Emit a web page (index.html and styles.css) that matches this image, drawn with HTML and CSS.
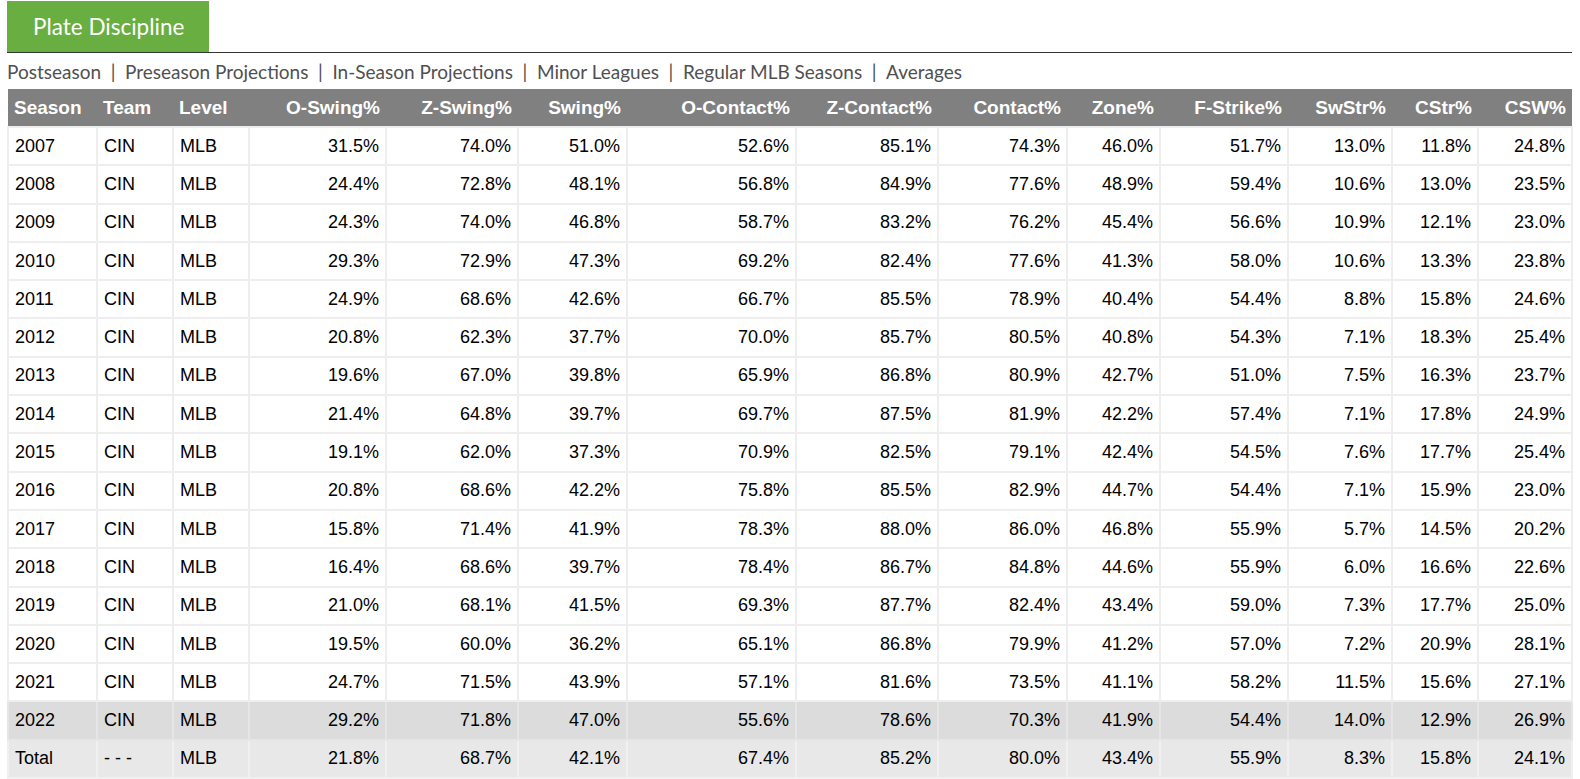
FILE: index.html
```html
<!DOCTYPE html>
<html>
<head>
<meta charset="utf-8">
<link rel="stylesheet" href="styles.css">
</head>
<body>
<div class="page">
  <div class="tabbar">
    <div class="tab">Plate Discipline</div>
  </div>
  <div class="links">
    <span class="link">Postseason</span><span class="sep">|</span><span class="link">Preseason Projections</span><span class="sep">|</span><span class="link">In-Season Projections</span><span class="sep">|</span><span class="link">Minor Leagues</span><span class="sep">|</span><span class="link">Regular MLB Seasons</span><span class="sep">|</span><span class="link">Averages</span>
  </div>
  <table class="stats">
    <colgroup>
      <col class="w-season"><col class="w-team"><col class="w-level"><col class="w-oswing"><col class="w-zswing"><col class="w-swing"><col class="w-ocontact"><col class="w-zcontact"><col class="w-contact"><col class="w-zone"><col class="w-fstrike"><col class="w-swstr"><col class="w-cstr"><col class="w-csw">
    </colgroup>
    <thead>
      <tr>
        <th class="l">Season</th><th class="l">Team</th><th class="l">Level</th><th>O-Swing%</th><th>Z-Swing%</th><th>Swing%</th><th>O-Contact%</th><th>Z-Contact%</th><th>Contact%</th><th>Zone%</th><th>F-Strike%</th><th>SwStr%</th><th>CStr%</th><th>CSW%</th>
      </tr>
    </thead>
    <tbody>
      <tr><td class="l">2007</td><td class="l">CIN</td><td class="l">MLB</td><td>31.5%</td><td>74.0%</td><td>51.0%</td><td>52.6%</td><td>85.1%</td><td>74.3%</td><td>46.0%</td><td>51.7%</td><td>13.0%</td><td>11.8%</td><td>24.8%</td></tr>
      <tr><td class="l">2008</td><td class="l">CIN</td><td class="l">MLB</td><td>24.4%</td><td>72.8%</td><td>48.1%</td><td>56.8%</td><td>84.9%</td><td>77.6%</td><td>48.9%</td><td>59.4%</td><td>10.6%</td><td>13.0%</td><td>23.5%</td></tr>
      <tr><td class="l">2009</td><td class="l">CIN</td><td class="l">MLB</td><td>24.3%</td><td>74.0%</td><td>46.8%</td><td>58.7%</td><td>83.2%</td><td>76.2%</td><td>45.4%</td><td>56.6%</td><td>10.9%</td><td>12.1%</td><td>23.0%</td></tr>
      <tr><td class="l">2010</td><td class="l">CIN</td><td class="l">MLB</td><td>29.3%</td><td>72.9%</td><td>47.3%</td><td>69.2%</td><td>82.4%</td><td>77.6%</td><td>41.3%</td><td>58.0%</td><td>10.6%</td><td>13.3%</td><td>23.8%</td></tr>
      <tr><td class="l">2011</td><td class="l">CIN</td><td class="l">MLB</td><td>24.9%</td><td>68.6%</td><td>42.6%</td><td>66.7%</td><td>85.5%</td><td>78.9%</td><td>40.4%</td><td>54.4%</td><td>8.8%</td><td>15.8%</td><td>24.6%</td></tr>
      <tr><td class="l">2012</td><td class="l">CIN</td><td class="l">MLB</td><td>20.8%</td><td>62.3%</td><td>37.7%</td><td>70.0%</td><td>85.7%</td><td>80.5%</td><td>40.8%</td><td>54.3%</td><td>7.1%</td><td>18.3%</td><td>25.4%</td></tr>
      <tr><td class="l">2013</td><td class="l">CIN</td><td class="l">MLB</td><td>19.6%</td><td>67.0%</td><td>39.8%</td><td>65.9%</td><td>86.8%</td><td>80.9%</td><td>42.7%</td><td>51.0%</td><td>7.5%</td><td>16.3%</td><td>23.7%</td></tr>
      <tr><td class="l">2014</td><td class="l">CIN</td><td class="l">MLB</td><td>21.4%</td><td>64.8%</td><td>39.7%</td><td>69.7%</td><td>87.5%</td><td>81.9%</td><td>42.2%</td><td>57.4%</td><td>7.1%</td><td>17.8%</td><td>24.9%</td></tr>
      <tr><td class="l">2015</td><td class="l">CIN</td><td class="l">MLB</td><td>19.1%</td><td>62.0%</td><td>37.3%</td><td>70.9%</td><td>82.5%</td><td>79.1%</td><td>42.4%</td><td>54.5%</td><td>7.6%</td><td>17.7%</td><td>25.4%</td></tr>
      <tr><td class="l">2016</td><td class="l">CIN</td><td class="l">MLB</td><td>20.8%</td><td>68.6%</td><td>42.2%</td><td>75.8%</td><td>85.5%</td><td>82.9%</td><td>44.7%</td><td>54.4%</td><td>7.1%</td><td>15.9%</td><td>23.0%</td></tr>
      <tr><td class="l">2017</td><td class="l">CIN</td><td class="l">MLB</td><td>15.8%</td><td>71.4%</td><td>41.9%</td><td>78.3%</td><td>88.0%</td><td>86.0%</td><td>46.8%</td><td>55.9%</td><td>5.7%</td><td>14.5%</td><td>20.2%</td></tr>
      <tr><td class="l">2018</td><td class="l">CIN</td><td class="l">MLB</td><td>16.4%</td><td>68.6%</td><td>39.7%</td><td>78.4%</td><td>86.7%</td><td>84.8%</td><td>44.6%</td><td>55.9%</td><td>6.0%</td><td>16.6%</td><td>22.6%</td></tr>
      <tr><td class="l">2019</td><td class="l">CIN</td><td class="l">MLB</td><td>21.0%</td><td>68.1%</td><td>41.5%</td><td>69.3%</td><td>87.7%</td><td>82.4%</td><td>43.4%</td><td>59.0%</td><td>7.3%</td><td>17.7%</td><td>25.0%</td></tr>
      <tr><td class="l">2020</td><td class="l">CIN</td><td class="l">MLB</td><td>19.5%</td><td>60.0%</td><td>36.2%</td><td>65.1%</td><td>86.8%</td><td>79.9%</td><td>41.2%</td><td>57.0%</td><td>7.2%</td><td>20.9%</td><td>28.1%</td></tr>
      <tr><td class="l">2021</td><td class="l">CIN</td><td class="l">MLB</td><td>24.7%</td><td>71.5%</td><td>43.9%</td><td>57.1%</td><td>81.6%</td><td>73.5%</td><td>41.1%</td><td>58.2%</td><td>11.5%</td><td>15.6%</td><td>27.1%</td></tr>
      <tr class="current"><td class="l">2022</td><td class="l">CIN</td><td class="l">MLB</td><td>29.2%</td><td>71.8%</td><td>47.0%</td><td>55.6%</td><td>78.6%</td><td>70.3%</td><td>41.9%</td><td>54.4%</td><td>14.0%</td><td>12.9%</td><td>26.9%</td></tr>
      <tr class="total"><td class="l">Total</td><td class="l">- - -</td><td class="l">MLB</td><td>21.8%</td><td>68.7%</td><td>42.1%</td><td>67.4%</td><td>85.2%</td><td>80.0%</td><td>43.4%</td><td>55.9%</td><td>8.3%</td><td>15.8%</td><td>24.1%</td></tr>
    </tbody>
  </table>
</div>
</body>
</html>
```

FILE: styles.css
```css
html, body {
  margin: 0;
  padding: 0;
  background: #ffffff;
}

.page {
  padding: 1px 8px 0 7px;
}

.tabbar {
  display: flex;
  border-bottom: 1px solid #333333;
}

.tab {
  width: 202px;
  height: 51px;
  box-sizing: border-box;
  padding-left: 26px;
  display: flex;
  align-items: center;
  background: #69ae40;
  color: #ffffff;
  font-family: Lato, "Liberation Sans", sans-serif;
  font-size: 22.5px;
}

.links {
  height: 36px;
  box-sizing: border-box;
  padding-top: 2px;
  line-height: 34px;
  font-family: Lato, "Liberation Sans", sans-serif;
  font-size: 19px;
  color: #505050;
  white-space: nowrap;
}

.sep {
  margin: 0 9.6px;
}

.stats {
  width: 100%;
  table-layout: fixed;
  border-collapse: collapse;
  font-family: "Liberation Sans", Arial, sans-serif;
  font-size: 18px;
  color: #000000;
}

.w-season { width: 89px; }
.w-team { width: 76px; }
.w-level { width: 76px; }
.w-oswing { width: 137px; }
.w-zswing { width: 132px; }
.w-swing { width: 109px; }
.w-ocontact { width: 169px; }
.w-zcontact { width: 142px; }
.w-contact { width: 129px; }
.w-zone { width: 93px; }
.w-fstrike { width: 128px; }
.w-swstr { width: 104px; }
.w-cstr { width: 86px; }
.w-csw { width: 94px; }

.stats th {
  height: 37px;
  padding: 0 6px;
  background: #808080;
  color: #ffffff;
  font-size: 19px;
  font-weight: bold;
  text-align: right;
  border: none;
  white-space: nowrap;
}

.stats td {
  height: 36.3px;
  padding: 0 6px;
  text-align: right;
  border: 2px solid #eeeeee;
  white-space: nowrap;
}

.stats th.l,
.stats td.l {
  text-align: left;
}

.stats tr.current td {
  background: #dcdcdc;
  border-color: #e6e6e6;
}

.stats tr.total td {
  background: #e8e8e8;
  border-color: #f0f0f0;
}
```
